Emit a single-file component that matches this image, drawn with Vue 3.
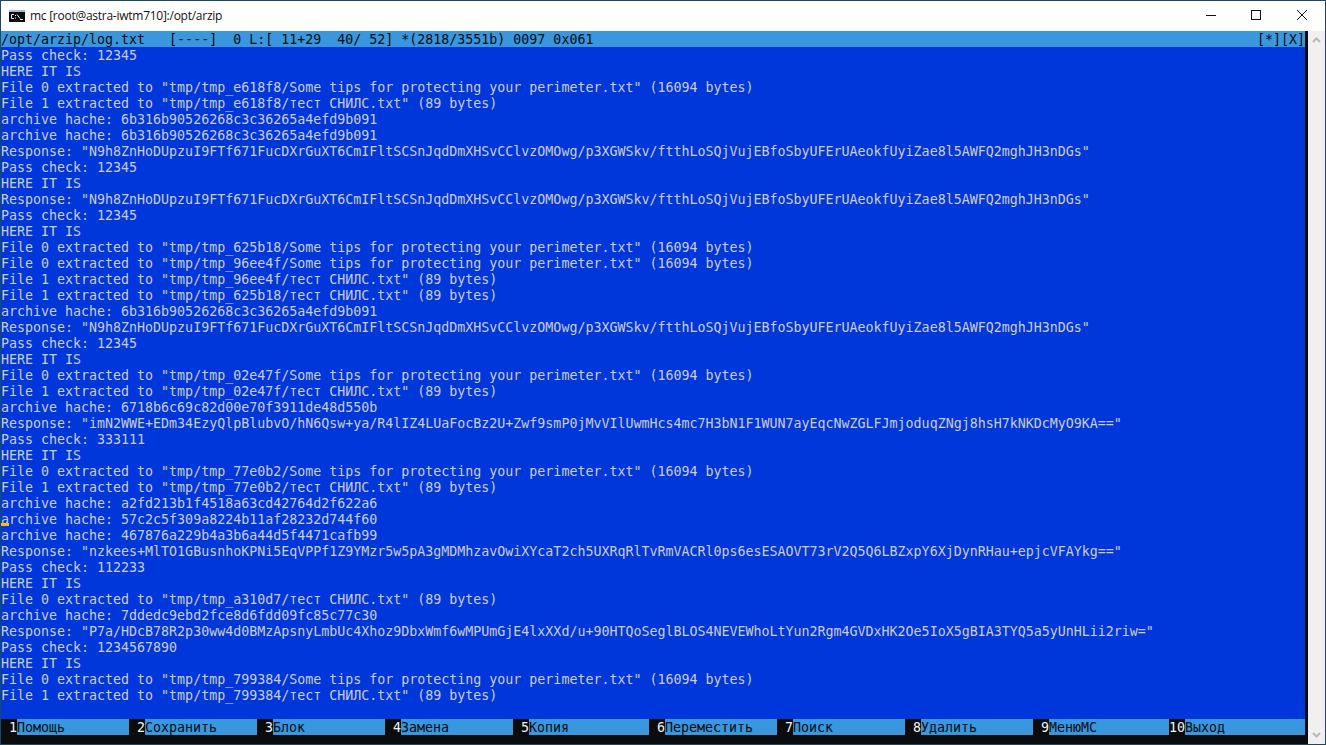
<script setup>
const fileSome = (id, n = 0) => `File ${n} extracted to "tmp/tmp_${id}/Some tips for protecting your perimeter.txt" (16094 bytes)`
const fileSnils = (id, n = 1) => `File ${n} extracted to "tmp/tmp_${id}/тест СНИЛС.txt" (89 bytes)`
const hache = (h) => `archive hache: ${h}`
const resp = (r) => `Response: "${r}"`
const pass = (p) => `Pass check: ${p}`
const here = 'HERE IT IS'
const h1 = '6b316b90526268c3c36265a4efd9b091'
const r1 = 'N9h8ZnHoDUpzuI9FTf671FucDXrGuXT6CmIFltSCSnJqdDmXHSvCClvzOMOwg/p3XGWSkv/ftthLoSQjVujEBfoSbyUFErUAeokfUyiZae8l5AWFQ2mghJH3nDGs'

const statusText = '/opt/arzip/log.txt   [----]  0 L:[ 11+29  40/ 52] *(2818/3551b) 0097 0x061'

const lines = [
  pass('12345'), here, fileSome('e618f8'), fileSnils('e618f8'), hache(h1), hache(h1), resp(r1),
  pass('12345'), here, resp(r1),
  pass('12345'), here,
  fileSome('625b18'), fileSome('96ee4f'), fileSnils('96ee4f'), fileSnils('625b18'), hache(h1), resp(r1),
  pass('12345'), here,
  fileSome('02e47f'), fileSnils('02e47f'), hache('6718b6c69c82d00e70f3911de48d550b'),
  resp('imN2WWE+EDm34EzyQlpBlubvO/hN6Qsw+ya/R4lIZ4LUaFocBz2U+Zwf9smP0jMvVIlUwmHcs4mc7H3bN1F1WUN7ayEqcNwZGLFJmjoduqZNgj8hsH7kNKDcMyO9KA=='),
  pass('333111'), here,
  fileSome('77e0b2'), fileSnils('77e0b2'),
  hache('a2fd213b1f4518a63cd42764d2f622a6'), hache('57c2c5f309a8224b11af28232d744f60'), hache('467876a229b4a3b6a44d5f4471cafb99'),
  resp('nzkees+MlTO1GBusnhoKPNi5EqVPPf1Z9YMzr5w5pA3gMDMhzavOwiXYcaT2ch5UXRqRlTvRmVACRl0ps6esESAOVT73rV2Q5Q6LBZxpY6XjDynRHau+epjcVFAYkg=='),
  pass('112233'), here,
  fileSnils('a310d7', 0), hache('7ddedc9ebd2fce8d6fdd09fc85c77c30'),
  resp('P7a/HDcB78R2p30ww4d0BMzApsnyLmbUc4Xhoz9DbxWmf6wMPUmGjE4lxXXd/u+90HTQoSeglBLOS4NEVEWhoLtYun2Rgm4GVDxHK2Oe5IoX5gBIA3TYQ5a5yUnHLii2riw='),
  pass('1234567890'), here, fileSome('799384'), fileSnils('799384'), ' ',
]

const keys = [
  { n: ' 1', t: 'Помощь', w: 128 },
  { n: ' 2', t: 'Сохранить', w: 128 },
  { n: ' 3', t: 'Блок', w: 128 },
  { n: ' 4', t: 'Замена', w: 128 },
  { n: ' 5', t: 'Копия', w: 136 },
  { n: ' 6', t: 'Переместить', w: 128 },
  { n: ' 7', t: 'Поиск', w: 128 },
  { n: ' 8', t: 'Удалить', w: 128 },
  { n: ' 9', t: 'МенюМС', w: 136 },
  { n: '10', t: 'Выход', w: 136 },
]
</script>

<template>
  <div class="window">
    <header class="titlebar">
      <svg class="appicon" width="16" height="12" viewBox="0 0 16 12">
        <rect width="16" height="12" fill="#0c0c0c" />
        <rect x="0" y="0" width="16" height="2" fill="#b8b8b8" />
        <path d="M5 4.5H2.5V8.5H5M6.5 5V6M6.5 7.5V8.5M8 4.5L11 8.5" fill="none" stroke="#e8e8e8" stroke-width="1" />
        <rect x="11" y="9" width="3" height="1" fill="#e8e8e8" />
      </svg>
      <span class="title">mc [root@astra-iwtm710]:/opt/arzip</span>
      <div class="controls">
        <svg class="ctl" width="46" height="30" viewBox="0 0 46 30"><path d="M19 14.5H29" stroke="#111" fill="none" /></svg>
        <svg class="ctl" width="46" height="30" viewBox="0 0 46 30"><rect x="18.5" y="9.5" width="9" height="9" stroke="#111" fill="none" /></svg>
        <svg class="ctl" width="46" height="30" viewBox="0 0 46 30"><path d="M18 9L28 19M28 9L18 19" stroke="#111" fill="none" /></svg>
      </div>
    </header>
    <div class="client">
      <main class="terminal">
        <div class="status">
          <span>{{ statusText }}</span>
          <span>[*][X]</span>
        </div>
        <div class="body">
          <div v-for="(l, i) in lines" :key="i" class="row">{{ l }}</div>
          <i class="cursor"></i>
        </div>
        <nav class="fnbar">
          <div v-for="k in keys" :key="k.n" class="fn" :style="{ width: k.w + 'px' }">
            <span class="num">{{ k.n }}</span><span class="label">{{ k.t }}</span>
          </div>
        </nav>
        <div class="bottom"></div>
      </main>
      <div class="gutter"></div>
      <aside class="scrollbar">
        <svg width="17" height="17" viewBox="0 0 17 17"><path d="M5 11L8.5 7.5L12 11" stroke="#b9b9b9" stroke-width="2" fill="none" /></svg>
        <svg width="17" height="17" viewBox="0 0 17 17"><path d="M5 6L8.5 9.5L12 6" stroke="#b9b9b9" stroke-width="2" fill="none" /></svg>
      </aside>
    </div>
  </div>
</template>

<style>
html, body { margin: 0; background: #0c0c0c; overflow: hidden; }
</style>

<style scoped>
.window {
  width: 1326px;
  height: 745px;
  box-sizing: border-box;
  border: 1px solid #1c4866;
  display: flex;
  flex-direction: column;
  background: #fff;
  overflow: hidden;
}
.titlebar {
  height: 30px;
  flex: none;
  display: flex;
  align-items: center;
  padding-left: 8px;
  background: #fff;
}
.appicon { flex: none; margin-right: 5px; }
.title {
  font: 12px/16px "Open Sans", "Noto Sans", sans-serif;
  letter-spacing: -0.26px;
  color: #111;
  white-space: pre;
}
.controls { margin-left: auto; display: flex; }
.ctl { display: block; }
.client { flex: 1; display: flex; min-height: 0; }
.terminal {
  width: 1304px;
  flex: none;
  position: relative;
  display: flex;
  flex-direction: column;
  font: 13.31px/18px "DejaVu Sans Mono", "Liberation Mono", monospace;
  color: #ccc;
  background: #0037da;
  white-space: pre;
}
.status {
  height: 16px;
  background: #3a96dd;
  color: #0c0c0c;
  display: flex;
  justify-content: space-between;
}
.body { position: relative; flex: none; height: 672px; }
.row { height: 16px; }
.cursor {
  position: absolute;
  left: 0;
  top: 476px;
  width: 8px;
  height: 3px;
  background: #f9b916;
}
.fnbar { display: flex; height: 16px; background: #3a96dd; flex: none; }
.fn { display: flex; flex: none; height: 16px; }
.num { width: 16px; height: 16px; background: #0c0c0c; color: #f2f2f2; }
.label { flex: 1; height: 16px; background: #3a96dd; color: #0c0c0c; }
.bottom { flex: 1; background: #0c0c0c; }
.gutter { width: 3px; flex: none; background: #0c0c0c; }
.scrollbar {
  flex: 1;
  background: #f0f0f0;
  display: flex;
  flex-direction: column;
  justify-content: space-between;
}
.scrollbar svg { display: block; }
</style>
